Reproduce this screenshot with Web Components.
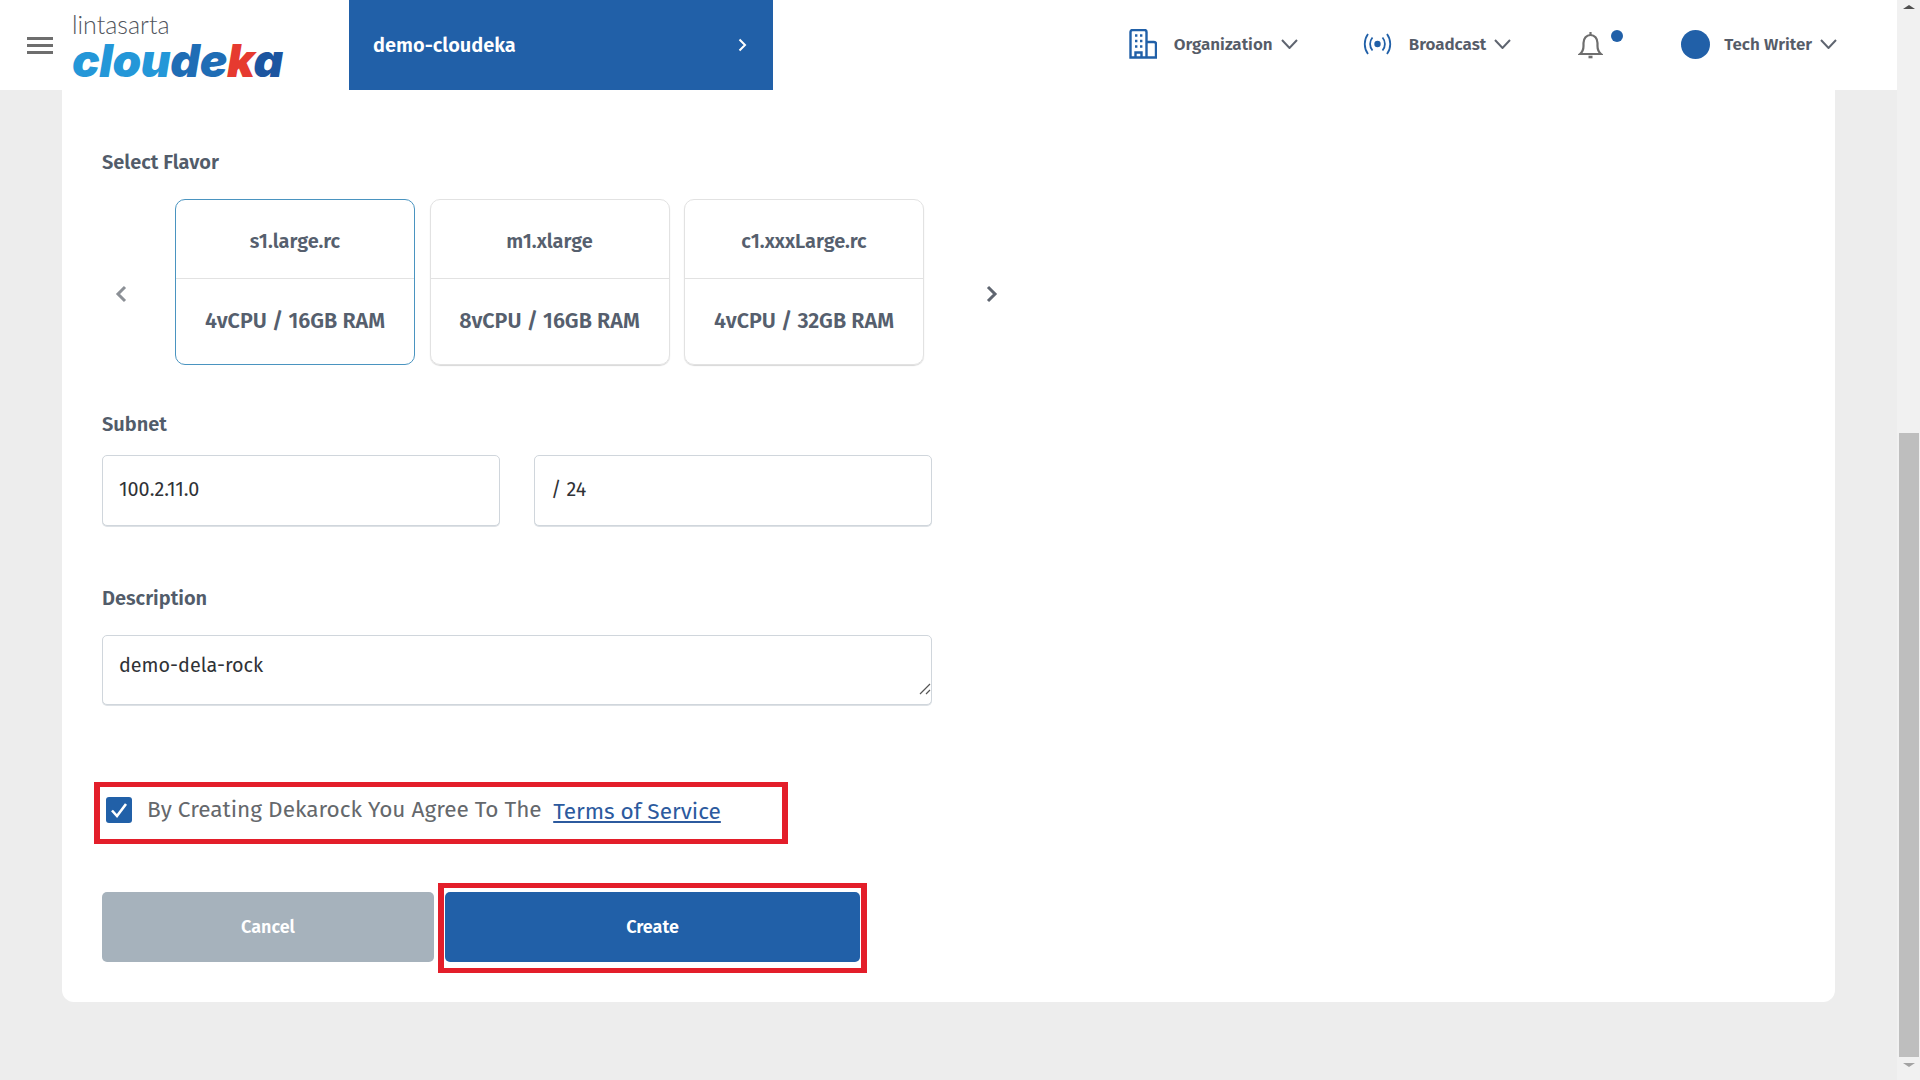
<!DOCTYPE html>
<html lang="en">
<head>
<meta charset="utf-8">
<title>Create Dekarock</title>
<style>
    html, body { margin: 0; height: 100%; overflow: hidden; }
    body { background: #ededed; font-family: "Open Sans", "Noto Sans", sans-serif; color: #556070; }
</style>
</head>
<body>
<app-shell>
    <top-bar project="demo-cloudeka"></top-bar>
    <form-card>
        <field-label>Select Flavor</field-label>
        <flavor-picker>
            <flavor-card name="s1.large.rc" spec="4vCPU / 16GB RAM" selected></flavor-card>
            <flavor-card name="m1.xlarge" spec="8vCPU / 16GB RAM"></flavor-card>
            <flavor-card name="c1.xxxLarge.rc" spec="4vCPU / 32GB RAM"></flavor-card>
        </flavor-picker>
        <field-label style="margin-top:47px">Subnet</field-label>
        <div style="display:flex;gap:34px;margin-top:19px">
            <text-box value="100.2.11.0"></text-box>
            <text-box value="/ 24"></text-box>
        </div>
        <field-label style="margin-top:60px">Description</field-label>
        <text-box value="demo-dela-rock" area style="margin-top:25px;width:830px"></text-box>
        <agree-row></agree-row>
        <div style="display:flex;align-items:center;gap:4px;margin-top:39px">
            <action-button kind="cancel" style="margin-bottom:2px">Cancel</action-button>
            <red-callout><action-button kind="create">Create</action-button></red-callout>
        </div>
    </form-card>
</app-shell>

<script>
const FONT = `"Fira Sans", "Open Sans", "Noto Sans", sans-serif`;

class AppShell extends HTMLElement {
    constructor() {
        super();
        this.attachShadow({mode: 'open'}).innerHTML = `
            <style>
                :host { display: flex; height: 1080px; }
                .main { flex: 1; min-width: 0; }
                .bar { width: 23px; background: #f1f1f1; display: flex; flex-direction: column; align-items: center; }
                .up, .down { width: 0; height: 0; border-left: 6px solid transparent; border-right: 6px solid transparent; }
                .up { border-bottom: 4px solid #505050; margin-top: 5px; }
                .thumb { width: 20px; height: 624px; margin: 424px 0 0 1px; background: #bebebe; }
                .down { border-top: 4px solid #a3a3a3; margin-top: 6px; }
            </style>
            <div class="main"><slot></slot></div>
            <div class="bar"><div class="up"></div><div class="thumb"></div><div class="down"></div></div>
        `;
    }
}

class NavItem extends HTMLElement {
    constructor() {
        super();
        this.attachShadow({mode: 'open'}).innerHTML = `
            <style>
                :host { display: flex; align-items: center; }
                span { font: 600 17px ${FONT}; color: #565c68; margin: 0 8px 0 var(--gap, 17px); white-space: nowrap; }
                svg { display: block; }
            </style>
            <slot></slot>
            <span>${this.getAttribute('label')}</span>
            <svg width="17" height="10" viewBox="0 0 17 10" fill="none" stroke="#5f6570" stroke-width="2"><path d="M1 1l7.5 8L16 1"/></svg>
        `;
    }
}

class TopBar extends HTMLElement {
    constructor() {
        super();
        this.attachShadow({mode: 'open'}).innerHTML = `
            <style>
                :host { display: flex; height: 90px; background: #fff; position: relative; align-items: center; }
                .burger { width: 26px; height: 17px; margin-left: 27px; border-top: 3px solid #6e6e6e; border-bottom: 3px solid #6e6e6e; box-sizing: border-box; position: relative; }
                .burger::after { content: ""; position: absolute; left: 0; right: 0; top: 4px; height: 3px; background: #6e6e6e; }
                .logo { margin-left: 19px; width: 277px; height: 90px; display: flex; flex-direction: column; }
                .small { font: 300 25px/24px "Lato", sans-serif; color: #50545c; margin-top: 12px; }
                .big { font: italic 900 46px/42px "Inter", sans-serif; margin-top: 3px; letter-spacing: -.400px; white-space: nowrap; }
                .c1 { color: #2497d8; } .c2 { color: #1f6db5; } .c3 { color: #e63a30; } .c4 { color: #1c55a0; }
                .project { width: 424px; height: 90px; background: #2160a8; color: #fff; display: flex; align-items: center; justify-content: space-between; box-sizing: border-box; padding: 0 26px 0 24px; font: 600 20px ${FONT}; }
                .right { display: flex; align-items: center; margin: 0 60px 2px auto; }
                .bell { position: relative; width: 25px; height: 29px; margin: 0 78px 0 67px; }
                .dot { position: absolute; left: 33px; top: 0; width: 12px; height: 12px; border-radius: 50%; background: #2160a8; }
                .avatar { width: 29px; height: 29px; border-radius: 50%; background: #2160a8; }
            </style>
            <div class="burger"></div>
            <div class="logo">
                <div class="small">lintasarta</div>
                <div class="big"><span class="c1">clou</span><span class="c2">de</span><span class="c3">k</span><span class="c4">a</span></div>
            </div>
            <div class="project">
                <span>${this.getAttribute('project')}</span>
                <svg width="9" height="14" viewBox="0 0 9 14" fill="none" stroke="#fff" stroke-width="2"><path d="M1.5 1.5L7 7l-5.500 5.500"/></svg>
            </div>
            <div class="right">
                <nav-item label="Organization" style="margin-right:65px">
                    <svg width="28" height="30" viewBox="0 0 28 30" fill="none" stroke="#2160a8" stroke-width="2.400"><path d="M1.500 28.500V3a2 2 0 0 1 2-2h12a2 2 0 0 1 2 2v25.500zM17 13h8a2 2 0 0 1 2 2v13.500H17M6.500 28.500v-5h6v5"/><path stroke-width="2.400" stroke-dasharray="2.400 2.600" d="M6 6.500h8M6 12h8M6 17.500h8"/></svg>
                </nav-item>
                <nav-item label="Broadcast">
                    <svg width="29" height="22" viewBox="0 0 29 22" fill="none" stroke="#2160a8" stroke-width="1.800"><circle cx="14.500" cy="11" r="3.200" fill="#2160a8" stroke="none"/><path d="M9.500 4.500a10 10 0 0 0 0 13M19.500 4.500a10 10 0 0 1 0 13M5 1a17 17 0 0 0 0 20M24 1a17 17 0 0 1 0 20"/></svg>
                </nav-item>
                <div class="bell">
                    <svg width="25" height="29" viewBox="0 0 25 29" fill="none" stroke="#6e6e6e" stroke-width="2.200"><path d="M2 24c2.500-2 3.500-4 3.500-8v-3c0-4.500 3-8 7-8s7 3.500 7 8v3c0 4 1 6 3.500 8z"/><path d="M12.500 5V2"/><path d="M10.500 27h4" stroke-width="2.600"/></svg>
                    <div class="dot"></div>
                </div>
                <nav-item label="Tech Writer" style="--gap:14px"><div class="avatar"></div></nav-item>
            </div>
        `;
    }
}

class FormCard extends HTMLElement {
    constructor() {
        super();
        this.attachShadow({mode: 'open'}).innerHTML = `
            <style>
                :host { display: block; box-sizing: border-box; width: 1773px; height: 912px; margin-left: 62px; background: #fff; border-radius: 0 0 12px 12px; padding: 60px 40px 0; }
            </style>
            <slot></slot>
        `;
    }
}

class FieldLabel extends HTMLElement {
    constructor() {
        super();
        this.attachShadow({mode: 'open'}).innerHTML = `
            <style>
                :host { display: block; font: 600 20px/24px ${FONT}; color: #525c6a; }
            </style>
            <slot></slot>
        `;
    }
}

class FlavorPicker extends HTMLElement {
    constructor() {
        super();
        this.attachShadow({mode: 'open'}).innerHTML = `
            <style>
                :host { display: flex; align-items: center; margin-top: 25px; }
                .arrow { flex: none; display: block; margin-top: 24px; }
                .items { display: flex; gap: 14.500px; margin: 0 62px 0 48px; }
            </style>
            <svg class="arrow" style="margin-left:13px" width="12" height="18" viewBox="0 0 12 18" fill="none" stroke="#8c9096" stroke-width="3"><path d="M10 2L3 9l7 7"/></svg>
            <div class="items"><slot></slot></div>
            <svg class="arrow" width="12" height="18" viewBox="0 0 12 18" fill="none" stroke="#5f6570" stroke-width="3"><path d="M2 2l7 7-7 7"/></svg>
        `;
    }
}

class FlavorCard extends HTMLElement {
    constructor() {
        super();
        this.attachShadow({mode: 'open'}).innerHTML = `
            <style>
                :host { display: block; box-sizing: border-box; width: 240px; height: 166px; border: 1px solid #e2e2e2; border-radius: 10px; box-shadow: 0 1px 1px #d8d8d8; font: 600 21.500px ${FONT}; color: #565f6e; text-align: center; }
                :host([selected]) { border-color: #4a94c0; box-shadow: none; }
                .name { height: 78px; line-height: 82px; border-bottom: 1px solid #e2e2e2; font-size: 20px; }
                .spec { height: 86px; line-height: 85px; white-space: nowrap; }
            </style>
            <div class="name">${this.getAttribute('name')}</div>
            <div class="spec">${this.getAttribute('spec')}</div>
        `;
    }
}

class TextBox extends HTMLElement {
    constructor() {
        super();
        const area = this.hasAttribute('area');
        this.attachShadow({mode: 'open'}).innerHTML = `
            <style>
                :host { display: block; box-sizing: border-box; position: relative; width: 398px; height: ${area ? 70 : 71}px; border: 1px solid #d0d6dc; border-radius: 5px; box-shadow: 0 1px 0 #dde1e5; background: #fff; padding: ${area ? 17 : 21}px 16px 0; font: 400 19.800px/24px ${FONT}; color: #2f3236; }
                svg { position: absolute; right: 0; bottom: 9px; }
            </style>
            ${this.getAttribute('value')}
            ${area ? '<svg width="12" height="12" viewBox="0 0 12 12" stroke="#555" stroke-width="1.200"><path d="M1 11L11 1M7 11l4-4"/></svg>' : ''}
        `;
    }
}

class AgreeRow extends HTMLElement {
    constructor() {
        super();
        this.attachShadow({mode: 'open'}).innerHTML = `
            <style>
                :host { display: flex; align-items: center; box-sizing: border-box; width: 694px; height: 62px; margin: 77px 0 0 -8px; border: 5px solid #e31e2a; border-width: 5px 6px; padding: 0 0 6px 6px; font: 400 22.600px ${FONT}; color: #65686c; white-space: nowrap; }
                .box { flex: none; width: 26px; height: 26px; border-radius: 3px; background: #2160a8; margin-right: 15px; display: block; }
                span { position: relative; top: -1px; }
                a { margin-left: 11.500px; color: #2c5a9e; text-decoration: underline; position: relative; top: 1.500px; }
            </style>
            <svg class="box" viewBox="0 0 26 26" fill="none" stroke="#fff" stroke-width="2.600"><path d="M6 13.500l5 5.500 9-12"/></svg>
            <span>By Creating Dekarock You Agree To The</span>
            <a>Terms of Service</a>
        `;
    }
}

class ActionButton extends HTMLElement {
    constructor() {
        super();
        const create = this.getAttribute('kind') === 'create';
        this.attachShadow({mode: 'open'}).innerHTML = `
            <style>
                :host { display: flex; align-items: center; justify-content: center; height: 70px; width: ${create ? 415 : 332}px; border-radius: 5px; background: ${create ? '#2160a8' : '#a6b2bc'}; color: #fff; font: 600 18px ${FONT}; }
            </style>
            <slot></slot>
        `;
    }
}

class RedCallout extends HTMLElement {
    constructor() {
        super();
        this.attachShadow({mode: 'open'}).innerHTML = `
            <style>
                :host { display: block; border: 5px solid #e31e2a; border-width: 5px 6px; padding: 4px 1px 6px; }
            </style>
            <slot></slot>
        `;
    }
}

customElements.define('app-shell', AppShell);
customElements.define('nav-item', NavItem);
customElements.define('top-bar', TopBar);
customElements.define('form-card', FormCard);
customElements.define('field-label', FieldLabel);
customElements.define('flavor-picker', FlavorPicker);
customElements.define('flavor-card', FlavorCard);
customElements.define('text-box', TextBox);
customElements.define('agree-row', AgreeRow);
customElements.define('action-button', ActionButton);
customElements.define('red-callout', RedCallout);
</script>
</body>
</html>
